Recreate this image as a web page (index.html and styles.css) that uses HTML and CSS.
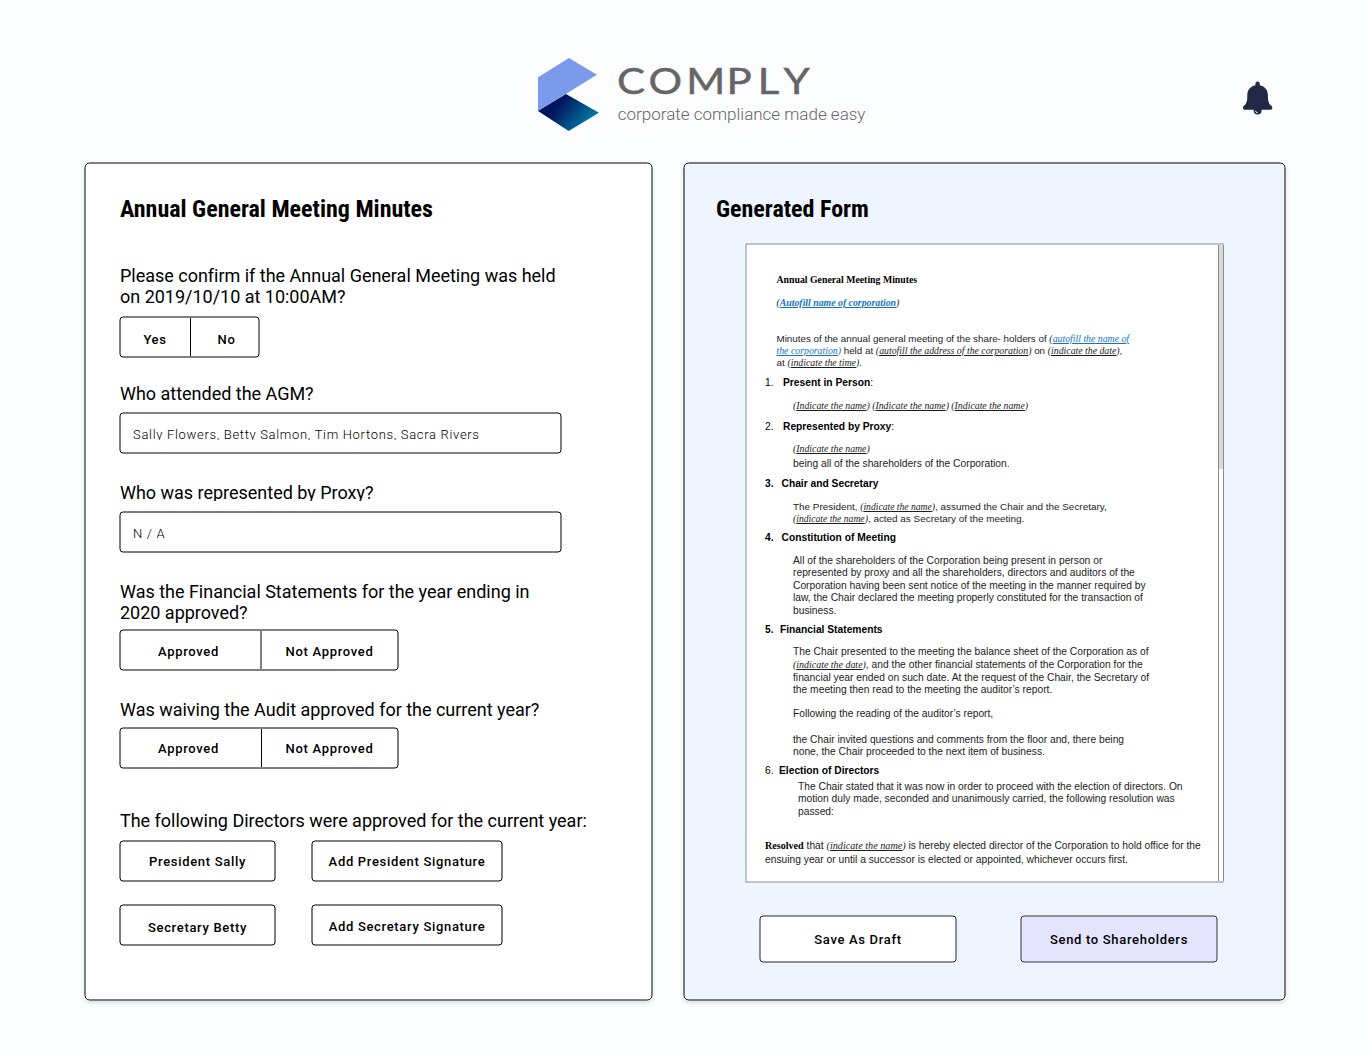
FILE: index.html
```html
<!DOCTYPE html>
<html lang="en">
<head>
<meta charset="utf-8">
<title>Comply</title>
<link rel="stylesheet" href="styles.css">
</head>
<body>
<header class="header">
  <svg class="logo" width="340" height="80" viewBox="0 0 340 80" role="img" aria-label="Comply">
    <defs>
      <linearGradient id="deep" x1="0.3" y1="0.35" x2="0.9" y2="0.65">
        <stop offset="0" stop-color="#00145c"/>
        <stop offset="1" stop-color="#0079a4"/>
      </linearGradient>
    </defs>
    <path d="M0 22.3 31 3 59 19.7 0 56Z" fill="#7b9aec"/>
    <path d="M0 56 28 39 61 57.7 30.7 76Z" fill="url(#deep)"/>
    <text class="logo-name" transform="scale(1.12 1)" y="39.3" x="70.500 98.600 132.300 168.300 196.300 219.200">COMPLY</text>
    <text class="logo-tag" x="79.800" y="65">corporate compliance made easy</text>
  </svg>
  <svg class="bell" width="30" height="34" viewBox="0 0 30 34" role="img" aria-label="Notifications">
    <circle cx="14.6" cy="29.5" r="4" fill="#232945"/>
    <path d="M14.6.6a2.2 2.2 0 0 1 2.2 2.3v1.3c5 1 8.1 4.800 8.100 9.800 0 6.500.7 8.800 3.700 11.100 1.400 1.200.7 3.700-1.400 3.700H2c-2.100 0-2.800-2.500-1.400-3.700 3-2.300 3.700-4.600 3.700-11.100 0-5 3.100-8.800 8.100-9.800V2.900A2.200 2.200 0 0 1 14.600.6Z" fill="#232945"/>
    <path d="M12.600 29.800a2 2 0 0 0 2 2" fill="none" stroke="#fcfdff" stroke-width="1"/>
  </svg>
</header>
<main class="panels">
  <section class="panel form">
    <h1 class="title">Annual General Meeting Minutes</h1>
    <p class="question q-held">Please confirm if the Annual General Meeting was held<br>on 2019/10/10 at 10:00AM?</p>
    <div class="toggle toggle-small"><button class="option">Yes</button><button class="option">No</button></div>
    <p class="question q-attended">Who attended the AGM?</p>
    <div class="field"><span class="value">Sally Flowers, Betty Salmon, Tim Hortons, Sacra Rivers</span></div>
    <p class="question q-proxy">Who was represented by Proxy?</p>
    <div class="field"><span class="value value-na">N / A</span></div>
    <p class="question q-statements">Was the Financial Statements for the year ending in<br>2020 approved?</p>
    <div class="toggle toggle-soft"><button class="option">Approved</button><button class="option">Not Approved</button></div>
    <p class="question q-audit">Was waiving the Audit approved for the current year?</p>
    <div class="toggle"><button class="option">Approved</button><button class="option">Not Approved</button></div>
    <p class="question q-directors">The following Directors were approved for the current year:</p>
    <div class="directors">
      <button class="button">President Sally</button>
      <button class="button">Add President Signature</button>
      <button class="button button-lower">Secretary Betty</button>
      <button class="button button-low">Add Secretary Signature</button>
    </div>
  </section>
  <section class="panel preview">
    <h2 class="title">Generated Form</h2>
    <div class="viewer">
      <article class="doc">
        <p class="doc-title">Annual General Meeting Minutes</p>
        <p class="doc-name"><i>(<b class="link">Autofill name of corporation</b>)</i></p>
        <p class="doc-intro">Minutes of the annual general meeting of the share- holders of <i>(<u class="link">autofill the name of</u></i><br><i class="link"><u>the corporation</u>)</i> held at <i>(<u>autofill the address of the corporation</u>)</i> on <i>(<u>indicate the date</u>)</i>,<br>at <i>(<u>indicate the time</u>)</i>.</p>
        <h3 class="item item-1"><span class="num plain">1.</span>Present in Person<span class="plain">:</span></h3>
        <p class="body b-present"><i>(<u>Indicate the name</u>) (<u>Indicate the name</u>) (<u>Indicate the name</u>)</i></p>
        <h3 class="item item-2"><span class="num plain">2.</span>Represented by Proxy<span class="plain">:</span></h3>
        <p class="body b-proxy"><i>(<u>Indicate the name</u>)</i></p>
        <p class="body b-being">being all of the shareholders of the Corporation.</p>
        <h3 class="item item-3"><span class="num">3.</span>Chair and Secretary</h3>
        <p class="body b-chair">The President, <i>(<u>indicate the name</u>)</i>, assumed the Chair and the Secretary,<br><i>(<u>indicate the name</u>)</i>, acted as Secretary of the meeting.</p>
        <h3 class="item item-4"><span class="num">4.</span>Constitution of Meeting</h3>
        <p class="body b-constitution">All of the shareholders of the Corporation being present in person or<br>represented by proxy and all the shareholders, directors and auditors of the<br>Corporation having been sent notice of the meeting in the manner required by<br>law, the Chair declared the meeting properly constituted for the transaction of<br>business.</p>
        <h3 class="item item-5"><span class="num">5.</span>Financial Statements</h3>
        <p class="body b-financial">The Chair presented to the meeting the balance sheet of the Corporation as of<br><i>(<u>indicate the date</u>)</i>, and the other financial statements of the Corporation for the<br>financial year ended on such date. At the request of the Chair, the Secretary of<br>the meeting then read to the meeting the auditor’s report.</p>
        <p class="body b-following">Following the reading of the auditor’s report,</p>
        <p class="body b-invited">the Chair invited questions and comments from the floor and, there being<br>none, the Chair proceeded to the next item of business.</p>
        <h3 class="item item-6"><span class="num plain">6.</span>Election of Directors</h3>
        <p class="body b-election">The Chair stated that it was now in order to proceed with the election of directors. On<br>motion duly made, seconded and unanimously carried, the following resolution was<br>passed:</p>
        <p class="resolved"><b>Resolved</b> that <i>(<u>indicate the name</u>)</i> is hereby elected director of the Corporation to hold office for the<br>ensuing year or until a successor is elected or appointed, whichever occurs first.</p>
      </article>
      <div class="scrollbar"><div class="thumb"></div></div>
    </div>
    <div class="actions">
      <button class="button action">Save As Draft</button>
      <button class="button action primary">Send to Shareholders</button>
    </div>
  </section>
</main>
</body>
</html>
```
FILE: styles.css
```css
* { box-sizing: border-box; }

/* Hairline rounded outlines, centred on the pixel boundary */
:root {
  --outline: url("data:image/svg+xml,%3Csvg xmlns='http://www.w3.org/2000/svg'%3E%3Crect x='1' y='1' rx='3' fill='%23fff' stroke='%23000' style='width:calc(100%25 - 2px);height:calc(100%25 - 2px)'/%3E%3C/svg%3E");
  --outline-action: url("data:image/svg+xml,%3Csvg xmlns='http://www.w3.org/2000/svg'%3E%3Crect x='1' y='1' rx='3' fill='%23fff' stroke='%23222630' style='width:calc(100%25 - 2px);height:calc(100%25 - 2px)'/%3E%3C/svg%3E");
  --outline-primary: url("data:image/svg+xml,%3Csvg xmlns='http://www.w3.org/2000/svg'%3E%3Crect x='1' y='1' rx='3' fill='%23e5e4fe' stroke='%23333640' style='width:calc(100%25 - 2px);height:calc(100%25 - 2px)'/%3E%3C/svg%3E");
  --outline-panel: url("data:image/svg+xml,%3Csvg xmlns='http://www.w3.org/2000/svg'%3E%3Crect x='1' y='1' rx='4.5' fill='%23fff' stroke='%23000' style='width:calc(100%25 - 2px);height:calc(100%25 - 2px)'/%3E%3C/svg%3E");
  --outline-preview: url("data:image/svg+xml,%3Csvg xmlns='http://www.w3.org/2000/svg'%3E%3Crect x='1' y='1' rx='4.5' fill='%23eef5ff' stroke='%23000' style='width:calc(100%25 - 2px);height:calc(100%25 - 2px)'/%3E%3C/svg%3E");
  --outline-doc: url("data:image/svg+xml,%3Csvg xmlns='http://www.w3.org/2000/svg'%3E%3Crect x='1' y='1' fill='%23fff' stroke='%23878c94' style='width:100%25;height:calc(100%25 - 2px)'/%3E%3C/svg%3E");
}

body {
  margin: 0;
  height: 1054px;
  background: #fcfdff;
  color: #000;
  font-family: Roboto, sans-serif;
  overflow: hidden;
}

p, h1, h2, h3 { margin: 0; }

/* Header */
.header {
  height: 162px;
  padding: 55px 95px 0 538px;
  display: flex;
  justify-content: space-between;
}
.logo { display: block; }
.logo-name {
  font: 400 37.500px Lato, sans-serif;
  fill: #666;
  stroke: #666;
  stroke-width: .5px;
}
.logo-tag {
  font: 300 17px Roboto, sans-serif;
  fill: #666;
}
.bell { margin-top: 26px; }

/* Panels */
.panels {
  display: flex;
  gap: 30px;
  padding-left: 84px;
}
.panel {
  height: 839px;
  border: 2px solid transparent;
  border-radius: 6px;
  box-shadow: 0 2px 4px rgba(0, 0, 0, .12);
}
.form {
  width: 569px;
  padding: 31px 0 0 33px;
  background: var(--outline-panel) 0 0 / 100% 100% no-repeat border-box;
}
.preview {
  width: 603px;
  padding: 31px 0 0 31px;
  background: var(--outline-preview) 0 0 / 100% 100% no-repeat border-box;
}
.title {
  font-size: 24px;
  line-height: 28px;
  font-weight: 700;
  font-family: "Roboto Condensed", Roboto, sans-serif;
  font-stretch: 75%;
}
.form .title { padding-left: 1px; }

/* Form */
.question {
  font-size: 18px;
  line-height: 21px;
  letter-spacing: -.015px;
  font-variant-ligatures: common-ligatures;
  white-space: nowrap;
  padding-left: 1px;
}
.q-held { margin: 42px 0 9px; }
.q-attended { margin: 25px 0 8px; }
.q-proxy { margin: 28px 0 10px; height: 19px; overflow: hidden; }
.q-statements { margin: 28px 0 6px; }
.q-audit { margin: 28px 0 7px; }
.q-directors { margin: 41px 0 9px; }

.toggle {
  display: flex;
  width: 280px;
  height: 42px;
}
.toggle, .field, .button {
  border: 2px solid transparent;
  background: var(--outline) 0 0 / 100% 100% no-repeat border-box;
}
.toggle-small { width: 141px; }
.option, .button {
  font: 500 13px/16px Roboto, sans-serif;
  letter-spacing: .68px;
  color: #000;
  margin: 0;
  padding: 1px 0 0;
  white-space: nowrap;
}
.option {
  width: 140px;
  border: 0;
  background: none;
  padding: 2px 5px 0 0;
}
.option + .option {
  flex: 1;
  padding-right: 0;
  border-left: 1px solid #000;
}
.toggle-small .option { width: 69px; padding: 5px 1px 0 0; }
.toggle-small .option + .option { padding: 5px 0 0 4px; }
.toggle-soft .option { width: 139px; padding-top: 3px; padding-right: 4px; }
.toggle-soft .option + .option { border-left: 2px solid #7f7f7f; padding-right: 0; }

.field {
  width: 443px;
  height: 42px;
  padding: 13px 12px 0;
}
.value {
  display: block;
  height: 13px;
  overflow: hidden;
  font-size: 13px;
  line-height: 16px;
  font-weight: 300;
  letter-spacing: .68px;
}
.value-na { height: 16px; }

.directors {
  display: grid;
  grid-template-columns: 157px 192px;
  grid-auto-rows: 42px;
  gap: 22px 35px;
}
.button-low { padding-top: 3px; }
.button-lower { padding-top: 5px; }

/* Document preview */
.viewer {
  display: flex;
  width: 479px;
  height: 640px;
  margin: 20px 0 32px 29px;
  border: 2px solid transparent;
  border-right: 0;
  background: var(--outline-doc) 0 0 / 100% 100% no-repeat border-box;
}
.doc {
  flex: 1;
  padding-top: 1px;
  font: 10.250px/12px "Liberation Sans", Arial, sans-serif;
  color: #1c1c1c;
  white-space: nowrap;
}
.doc i {
  font: italic 9.800px/0 "Liberation Serif", "Times New Roman", serif;
}
.doc .link { color: #1475c4; text-decoration: underline; }
.doc i.link { text-decoration: none; }
.doc-title {
  margin: 28px 0 11px 29.500px;
  font: 700 9.800px/12px "Liberation Serif", "Times New Roman", serif;
  color: #000;
}
.doc-name { margin-left: 29.500px; }
.doc .doc-name i { font-size: 9.800px; }
.doc-intro { margin: 24px 0 8px 29.500px; font-size: 9.800px; }
.item {
  margin-left: 18px;
  font-size: 10.250px;
  line-height: 12px;
  font-weight: 700;
  color: #000;
}
.num { display: inline-block; width: 16.500px; }
.item-1 .num, .item-2 .num { width: 18px; }
.item-5 .num { width: 15px; }
.item-6 .num { width: 14px; }
.plain { font-weight: 400; }
.body { margin-left: 46px; }
.b-present { margin-top: 11px; margin-bottom: 9px; }
.b-proxy { margin-top: 10px; margin-bottom: 3px; }
.b-being { margin-bottom: 8px; }
.b-chair { margin-top: 11px; margin-bottom: 8px; font-size: 9.920px; line-height: 11.500px; }
.doc .b-chair i { font-size: 9.650px; }
.b-constitution { margin-top: 10.700px; margin-bottom: 6.300px; font-size: 10.270px; line-height: 12.600px; }
.b-financial { margin-top: 10.500px; margin-bottom: 11.100px; font-size: 10.270px; line-height: 12.600px; }
.doc .b-financial i { font-size: 9.950px; }
.b-invited { margin-top: 13.700px; margin-bottom: 6.100px; line-height: 12.600px; }
.b-election { margin: 4px 0 20.700px 51px; line-height: 12.600px; }
.resolved { margin-left: 18px; line-height: 14px; }
.doc .resolved i { font-size: 10.200px; }
.resolved b {
  font: 700 10.100px/0 "Liberation Serif", "Times New Roman", serif;
  color: #000;
}
.scrollbar {
  width: 6px;
  border: solid #8b8b8b;
  border-width: 0 1px;
}
.thumb { height: 224px; background: #d8d8d8; }

.actions {
  display: flex;
  gap: 63px;
  margin-left: 43px;
}
.action {
  width: 198px;
  height: 48px;
  background-image: var(--outline-action);
}
.primary { background-image: var(--outline-primary); }
```
